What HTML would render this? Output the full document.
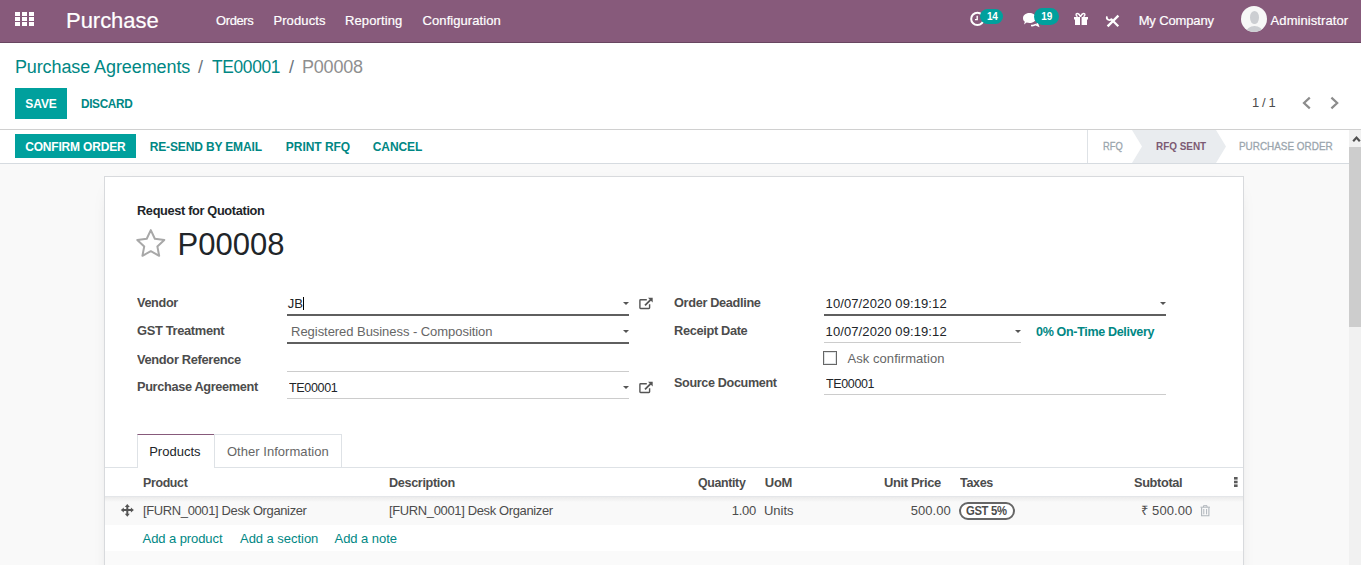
<!DOCTYPE html>
<html><head><meta charset="utf-8">
<style>
*{box-sizing:border-box;margin:0;padding:0}
html,body{width:1361px;height:565px;overflow:hidden;background:#fff}
body{position:relative;font-family:"Liberation Sans",sans-serif;color:#212529}
.a{position:absolute}
.t{position:absolute;line-height:1;white-space:nowrap}
svg{position:absolute;overflow:visible}
</style></head><body>
<!-- NAVBAR -->
<div class="a" style="left:0;top:0;width:1361px;height:43px;background:#875A7B;border-bottom:1px solid #684660"></div>
<svg style="left:15px;top:12px" width="19" height="14" fill="#fff">
<rect x="0" y="0" width="5" height="4"/><rect x="7" y="0" width="5" height="4"/><rect x="14" y="0" width="5" height="4"/>
<rect x="0" y="5" width="5" height="4"/><rect x="7" y="5" width="5" height="4"/><rect x="14" y="5" width="5" height="4"/>
<rect x="0" y="10" width="5" height="4"/><rect x="7" y="10" width="5" height="4"/><rect x="14" y="10" width="5" height="4"/>
</svg>

<!-- control panel line -->
<div class="a" style="left:0;top:129px;width:1361px;height:1px;background:#d0d0d0"></div>
<!-- buttons -->
<div class="a" style="left:15px;top:88px;width:52px;height:31px;background:#00A09D"></div>
<div class="a" style="left:15px;top:134px;width:121px;height:24px;background:#00A09D"></div>

<!-- content bg -->
<div class="a" style="left:0;top:164px;width:1349px;height:401px;background:#f9f9f9"></div>
<div class="a" style="left:0;top:163px;width:1349px;height:1px;background:#d6dbe0"></div>

<!-- statusbar right -->
<div class="a" style="left:1087px;top:130px;width:1px;height:33px;background:#dee2e6"></div>
<svg style="left:1130px;top:130px" width="100" height="33"><polygon points="2,0 86,0 96,16.5 86,33 2,33 12,16.5" fill="#e9ecef"/></svg>

<!-- SHEET -->
<div class="a" style="left:104px;top:176px;width:1140px;height:420px;background:#fff;border:1px solid #d8dadd;box-shadow:0 5px 20px -15px rgba(0,0,0,.4)"></div>

<!-- field lines -->
<div class="a" style="left:303px;top:297px;width:1px;height:13px;background:#000"></div>
<div class="a" style="left:287px;top:314px;width:342px;height:2px;background:#5f5f5f"></div>
<div class="a" style="left:287px;top:342px;width:342px;height:2px;background:#5f5f5f"></div>
<div class="a" style="left:287px;top:371px;width:342px;height:1px;background:#ccc"></div>
<div class="a" style="left:287px;top:398px;width:342px;height:1px;background:#ccc"></div>
<div class="a" style="left:824px;top:314px;width:342px;height:2px;background:#5f5f5f"></div>
<div class="a" style="left:824px;top:342px;width:197px;height:1px;background:#ccc"></div>
<div class="a" style="left:823px;top:351px;width:14px;height:14px;border:1.5px solid #666;background:#fff;box-shadow:inset 0 0 0 1px #dfe3e5"></div>
<div class="a" style="left:824px;top:394px;width:342px;height:1px;background:#ccc"></div>

<!-- carets -->
<svg style="left:623px;top:302px" width="6" height="3"><polygon points="0,0 6,0 3,3" fill="#555"/></svg>
<svg style="left:623px;top:330px" width="6" height="3"><polygon points="0,0 6,0 3,3" fill="#555"/></svg>
<svg style="left:623px;top:386px" width="6" height="3"><polygon points="0,0 6,0 3,3" fill="#555"/></svg>
<svg style="left:1160px;top:302px" width="6" height="3"><polygon points="0,0 6,0 3,3" fill="#555"/></svg>
<svg style="left:1015px;top:330px" width="6" height="3"><polygon points="0,0 6,0 3,3" fill="#555"/></svg>

<!-- tabs -->
<div class="a" style="left:105px;top:467px;width:1138px;height:1px;background:#dee2e6"></div>
<div class="a" style="left:137px;top:434px;width:78px;height:34px;background:#fff;border:1px solid #dee2e6;border-top-color:#875A7B;border-bottom:none"></div>
<div class="a" style="left:214px;top:434px;width:128px;height:33px;border:1px solid #dee2e6;border-bottom:none"></div>

<!-- table -->
<div class="a" style="left:105px;top:496px;width:1138px;height:1px;background:#e4e6e9"></div>
<div class="a" style="left:105px;top:497px;width:1138px;height:28px;background:linear-gradient(#ebebeb,#f9f9f9 5px)"></div>
<div class="a" style="left:105px;top:551px;width:1138px;height:14px;background:#fafafa"></div>
<div class="a" style="left:959px;top:502px;width:56px;height:18px;border:2px solid #666;border-radius:9px;background:#fff"></div>


<!-- navbar icons -->
<svg style="left:968px;top:10px" width="18" height="18"><circle cx="9.4" cy="8.9" r="6.2" fill="none" stroke="#fff" stroke-width="2"/><path d="M9.2 5.8 V9.6 H7" fill="none" stroke="#fff" stroke-width="1.4"/></svg>
<div class="a" style="left:980px;top:9px;width:23px;height:15px;border-radius:8px;background:#00A09D"></div>
<div class="t" style="left:987px;top:12px;font-size:10px;font-weight:bold;color:#fff;letter-spacing:-0.2px">14</div>
<svg style="left:1022px;top:12px" width="18" height="15"><path d="M1 6 C1 2.5 4.5 1 7.5 1 C10.5 1 14 2.5 14 6 C14 9.3 10.5 11 7.5 11 C6.5 11 5.5 10.9 4.6 10.6 L2 12.6 L2.8 9.8 C1.6 8.9 1 7.6 1 6Z" fill="#fff"/><path d="M9 13.5 C10.5 13.7 12.3 13.4 13.4 12.6 L16.2 13.8 L15.4 11.5 C16.4 10.6 16.8 9.6 16.8 8.6" fill="none" stroke="#fff" stroke-width="1.6"/></svg>
<div class="a" style="left:1034px;top:8px;width:25px;height:17px;border-radius:9px;background:#00A09D"></div>
<div class="t" style="left:1041.3px;top:12px;font-size:10px;font-weight:bold;color:#fff">19</div>
<svg style="left:1073px;top:12px" width="16" height="14"><path d="M7.5 4.6 C6.5 2.5 4.8 1.2 3.7 1.7 C2.6 2.2 3 4 4.6 4.6 M7.5 4.6 C8.5 2.5 10.2 1.2 11.3 1.7 C12.4 2.2 12 4 10.4 4.6" fill="none" stroke="#fff" stroke-width="1.4"/><path d="M1 5 H15 V7.6 H14 V13 H2 V7.6 H1Z" fill="#fff"/><rect x="7" y="5" width="1.6" height="8" fill="#875A7B"/></svg>
<svg style="left:1106px;top:14px" width="14" height="14"><path d="M1.6 12.4 L12.4 1.6" stroke="#fff" stroke-width="2.3" fill="none"/><path d="M5 5 L12.3 12.3" stroke="#fff" stroke-width="2.2" fill="none"/><path d="M1.1 2.4 A2.5 2.5 0 0 0 5.6 4.6" stroke="#fff" stroke-width="1.7" fill="none"/></svg>
<div class="a" style="left:1241px;top:6px;width:26px;height:26px;border-radius:50%;overflow:hidden;background:#f7f7f7"><div class="a" style="left:8.6px;top:4.7px;width:9.6px;height:13.6px;border-radius:50%;background:#ccced2"></div><div class="a" style="left:4.6px;top:19.5px;width:17.2px;height:14px;border-radius:50%;background:#ccced2"></div></div>

<!-- pager chevrons -->
<svg style="left:1301px;top:96px" width="12" height="14"><path d="M8.8 1.6 L3.0 7 L8.8 12.4" fill="none" stroke="#8c8c8c" stroke-width="2.2"/></svg>
<svg style="left:1329px;top:96px" width="12" height="14"><path d="M2.4 1.6 L8.2 7 L2.4 12.4" fill="none" stroke="#8c8c8c" stroke-width="2.2"/></svg>

<!-- star -->
<svg style="left:130px;top:223px" width="42" height="42"><polygon id="star" points="20.80,7.10 24.86,15.72 34.31,16.91 27.36,23.43 29.15,32.79 20.80,28.20 12.45,32.79 14.24,23.43 7.29,16.91 16.74,15.72" fill="none" stroke="#a8a8a8" stroke-width="2" stroke-linejoin="round"/></svg>

<!-- external links -->
<svg style="left:638px;top:297px" width="16" height="13"><path d="M8.8 2.7 H2.6 Q1.9 2.7 1.9 3.4 V10.8 Q1.9 11.5 2.6 11.5 H10.9 Q11.6 11.5 11.6 10.8 V7.2" fill="none" stroke="#555" stroke-width="1.4"/><path d="M7 8.4 L13.3 2.1" stroke="#555" stroke-width="1.8"/><polygon points="10,0.8 14.7,0.8 14.7,5.5" fill="#555"/></svg>
<svg style="left:638px;top:381px" width="16" height="13"><path d="M8.8 2.7 H2.6 Q1.9 2.7 1.9 3.4 V10.8 Q1.9 11.5 2.6 11.5 H10.9 Q11.6 11.5 11.6 10.8 V7.2" fill="none" stroke="#555" stroke-width="1.4"/><path d="M7 8.4 L13.3 2.1" stroke="#555" stroke-width="1.8"/><polygon points="10,0.8 14.7,0.8 14.7,5.5" fill="#555"/></svg>

<!-- drag handle -->
<svg style="left:120px;top:503px" width="15" height="15"><path d="M7.3 3 V11.5 M3 7.1 H11.7" stroke="#555" stroke-width="2"/><polygon points="7.3,0.9 9.8,3.9 4.8,3.9" fill="#555"/><polygon points="7.3,13.8 9.8,10.8 4.8,10.8" fill="#555"/><polygon points="0.8,7.1 3.8,4.6 3.8,9.6" fill="#555"/><polygon points="13.9,7.1 10.9,4.6 10.9,9.6" fill="#555"/></svg>

<!-- dots -->
<svg style="left:1234px;top:477px" width="4" height="10" fill="#5a5a5a"><rect x="0" y="0" width="3.6" height="2.6"/><rect x="0" y="3.7" width="3.6" height="2.6"/><rect x="0" y="7.4" width="3.6" height="2.6"/></svg>

<!-- trash -->
<svg style="left:1200px;top:505px" width="11" height="12"><path d="M0.5 2.2 H10 M3.5 2.2 V0.7 H7 V2.2" fill="none" stroke="#b0b6bc" stroke-width="1"/><path d="M1.6 2.5 V10.7 H8.9 V2.5" fill="none" stroke="#b0b6bc" stroke-width="1.1"/><path d="M3.8 4 V9.3 M6.6 4 V9.3" stroke="#b0b6bc" stroke-width="1"/></svg>


<!-- scrollbar -->
<div class="a" style="left:1349px;top:130px;width:12px;height:435px;background:#f1f1f1"></div>
<div class="a" style="left:1349px;top:147px;width:12px;height:180px;background:#cdcdcd"></div>
<!-- scroll arrow -->
<svg style="left:1349px;top:130px" width="12" height="17"><path d="M4.2 11.2 L7.5 7.6 L10.8 11.2" fill="none" stroke="#505050" stroke-width="2.2"/></svg>

<div class="t" style="left:66.00px;top:10.00px;font-size:22px;color:#ffffff;letter-spacing:-0.029px;-webkit-text-stroke:0.2px #fff">Purchase</div>
<div class="t" style="left:215.80px;top:14.20px;font-size:13px;color:#ffffff;letter-spacing:-0.350px;transform:scaleX(0.9927);transform-origin:0 0;-webkit-text-stroke:0.2px #fff">Orders</div>
<div class="t" style="left:273.40px;top:14.20px;font-size:13px;color:#ffffff;letter-spacing:0.114px;-webkit-text-stroke:0.2px #fff">Products</div>
<div class="t" style="left:345.00px;top:14.20px;font-size:13px;color:#ffffff;letter-spacing:0.108px;-webkit-text-stroke:0.2px #fff">Reporting</div>
<div class="t" style="left:422.60px;top:14.20px;font-size:13px;color:#ffffff;letter-spacing:0.067px;-webkit-text-stroke:0.2px #fff">Configuration</div>
<div class="t" style="left:1138.70px;top:14.00px;font-size:13px;color:#ffffff;letter-spacing:-0.142px;-webkit-text-stroke:0.2px #fff">My Company</div>
<div class="t" style="left:1270.60px;top:14.00px;font-size:13px;color:#ffffff;letter-spacing:0.071px;-webkit-text-stroke:0.2px #fff">Administrator</div>
<div class="t" style="left:14.90px;top:57.90px;font-size:18px;color:#008784;letter-spacing:-0.094px">Purchase Agreements</div>
<div class="t" style="left:198.00px;top:57.90px;font-size:18px;color:#6c757d">/</div>
<div class="t" style="left:212.30px;top:57.90px;font-size:18px;color:#008784;letter-spacing:-0.350px;transform:scaleX(0.9641);transform-origin:0 0">TE00001</div>
<div class="t" style="left:289.00px;top:57.90px;font-size:18px;color:#6c757d">/</div>
<div class="t" style="left:302.00px;top:57.90px;font-size:18px;color:#8f8f8f;letter-spacing:-0.210px">P00008</div>
<div class="t" style="left:25.30px;top:97.70px;font-size:12px;color:#ffffff;font-weight:bold;letter-spacing:-0.094px">SAVE</div>
<div class="t" style="left:80.70px;top:97.70px;font-size:12px;color:#008784;font-weight:bold;letter-spacing:-0.350px;transform:scaleX(0.9830);transform-origin:0 0">DISCARD</div>
<div class="t" style="left:1252.00px;top:96.00px;font-size:13px;color:#4c4c4c;letter-spacing:-0.350px;transform:scaleX(0.9972);transform-origin:0 0">1 / 1</div>
<div class="t" style="left:25.20px;top:140.50px;font-size:12px;color:#ffffff;font-weight:bold;letter-spacing:-0.183px">CONFIRM ORDER</div>
<div class="t" style="left:149.70px;top:140.50px;font-size:12px;color:#008784;font-weight:bold;letter-spacing:-0.143px">RE-SEND BY EMAIL</div>
<div class="t" style="left:285.80px;top:140.50px;font-size:12px;color:#008784;font-weight:bold;letter-spacing:-0.041px">PRINT RFQ</div>
<div class="t" style="left:372.80px;top:140.50px;font-size:12px;color:#008784;font-weight:bold;letter-spacing:-0.114px">CANCEL</div>
<div class="t" style="left:1103.20px;top:140.50px;font-size:11.5px;color:#9aa5ad;transform:scaleX(0.8138);transform-origin:0 0;-webkit-text-stroke:0.3px #9aa5ad">RFQ</div>
<div class="t" style="left:1155.60px;top:140.50px;font-size:11.5px;color:#7c5a73;font-weight:bold;transform:scaleX(0.8621);transform-origin:0 0">RFQ SENT</div>
<div class="t" style="left:1238.60px;top:140.50px;font-size:11.5px;color:#9aa5ad;transform:scaleX(0.8622);transform-origin:0 0;-webkit-text-stroke:0.3px #9aa5ad">PURCHASE ORDER</div>
<div class="t" style="left:136.80px;top:203.80px;font-size:13px;color:#212529;font-weight:bold;letter-spacing:-0.350px;transform:scaleX(0.9818);transform-origin:0 0">Request for Quotation</div>
<div class="t" style="left:177.60px;top:228.80px;font-size:31px;color:#212529;letter-spacing:0.012px">P00008</div>
<div class="t" style="left:137.00px;top:296.30px;font-size:13px;color:#4c4c4c;font-weight:bold;letter-spacing:-0.350px;transform:scaleX(0.9750);transform-origin:0 0">Vendor</div>
<div class="t" style="left:137.00px;top:324.20px;font-size:13px;color:#4c4c4c;font-weight:bold;letter-spacing:-0.350px;transform:scaleX(0.9917);transform-origin:0 0">GST Treatment</div>
<div class="t" style="left:137.00px;top:353.00px;font-size:13px;color:#4c4c4c;font-weight:bold;letter-spacing:-0.350px;transform:scaleX(0.9899);transform-origin:0 0">Vendor Reference</div>
<div class="t" style="left:137.00px;top:379.80px;font-size:13px;color:#4c4c4c;font-weight:bold;letter-spacing:-0.350px;transform:scaleX(0.9810);transform-origin:0 0">Purchase Agreement</div>
<div class="t" style="left:673.90px;top:296.10px;font-size:13px;color:#4c4c4c;font-weight:bold;letter-spacing:-0.350px;transform:scaleX(0.9806);transform-origin:0 0">Order Deadline</div>
<div class="t" style="left:673.90px;top:324.20px;font-size:13px;color:#4c4c4c;font-weight:bold;letter-spacing:-0.350px;transform:scaleX(0.9843);transform-origin:0 0">Receipt Date</div>
<div class="t" style="left:673.90px;top:376.00px;font-size:13px;color:#4c4c4c;font-weight:bold;letter-spacing:-0.350px;transform:scaleX(0.9690);transform-origin:0 0">Source Document</div>
<div class="t" style="left:287.70px;top:297.20px;font-size:13px;color:#212529">JB</div>
<div class="t" style="left:291.10px;top:325.20px;font-size:13px;color:#666666;letter-spacing:-0.050px">Registered Business - Composition</div>
<div class="t" style="left:288.70px;top:380.60px;font-size:13px;color:#212529;letter-spacing:-0.350px;transform:scaleX(0.9637);transform-origin:0 0">TE00001</div>
<div class="t" style="left:825.60px;top:297.00px;font-size:13px;color:#212529;letter-spacing:0.097px">10/07/2020 09:19:12</div>
<div class="t" style="left:825.60px;top:324.80px;font-size:13px;color:#212529;letter-spacing:0.097px">10/07/2020 09:19:12</div>
<div class="t" style="left:1036.00px;top:325.00px;font-size:13px;color:#008784;font-weight:bold;letter-spacing:-0.350px;transform:scaleX(0.9647);transform-origin:0 0">0% On-Time Delivery</div>
<div class="t" style="left:847.50px;top:351.70px;font-size:13px;color:#666666;letter-spacing:0.056px">Ask confirmation</div>
<div class="t" style="left:826.00px;top:376.80px;font-size:13px;color:#212529;letter-spacing:-0.350px;transform:scaleX(0.9577);transform-origin:0 0">TE00001</div>
<div class="t" style="left:149.20px;top:445.00px;font-size:13px;color:#212529;letter-spacing:0.014px">Products</div>
<div class="t" style="left:226.90px;top:445.00px;font-size:13px;color:#666666;letter-spacing:0.042px">Other Information</div>
<div class="t" style="left:142.60px;top:475.80px;font-size:13px;color:#4c4c4c;font-weight:bold;letter-spacing:-0.350px;transform:scaleX(0.9521);transform-origin:0 0">Product</div>
<div class="t" style="left:388.50px;top:475.80px;font-size:13px;color:#4c4c4c;font-weight:bold;letter-spacing:-0.350px;transform:scaleX(0.9725);transform-origin:0 0">Description</div>
<div class="t" style="left:697.90px;top:475.80px;font-size:13px;color:#4c4c4c;font-weight:bold;letter-spacing:-0.350px;transform:scaleX(0.9502);transform-origin:0 0">Quantity</div>
<div class="t" style="left:764.80px;top:475.80px;font-size:13px;color:#4c4c4c;font-weight:bold;letter-spacing:-0.265px">UoM</div>
<div class="t" style="left:883.80px;top:475.80px;font-size:13px;color:#4c4c4c;font-weight:bold;letter-spacing:-0.350px;transform:scaleX(0.9964);transform-origin:0 0">Unit Price</div>
<div class="t" style="left:959.50px;top:475.80px;font-size:13px;color:#4c4c4c;font-weight:bold;letter-spacing:-0.350px;transform:scaleX(0.9660);transform-origin:0 0">Taxes</div>
<div class="t" style="left:1133.90px;top:475.80px;font-size:13px;color:#4c4c4c;font-weight:bold;letter-spacing:-0.350px;transform:scaleX(0.9810);transform-origin:0 0">Subtotal</div>
<div class="t" style="left:142.60px;top:503.80px;font-size:13px;color:#4c4c4c;letter-spacing:-0.350px;transform:scaleX(0.9956);transform-origin:0 0">[FURN_0001] Desk Organizer</div>
<div class="t" style="left:388.50px;top:503.80px;font-size:13px;color:#4c4c4c;letter-spacing:-0.350px;transform:scaleX(0.9969);transform-origin:0 0">[FURN_0001] Desk Organizer</div>
<div class="t" style="left:731.80px;top:503.80px;font-size:13px;color:#4c4c4c;letter-spacing:-0.291px">1.00</div>
<div class="t" style="left:764.00px;top:503.80px;font-size:13px;color:#4c4c4c;letter-spacing:-0.030px">Units</div>
<div class="t" style="left:910.80px;top:503.80px;font-size:13px;color:#4c4c4c;letter-spacing:0.014px">500.00</div>
<div class="t" style="left:966.20px;top:504.70px;font-size:12px;color:#4c4c4c;font-weight:bold;letter-spacing:-0.350px;transform:scaleX(0.9379);transform-origin:0 0">GST 5%</div>
<div class="t" style="left:1141.30px;top:503.80px;font-size:13px;color:#4c4c4c;letter-spacing:0.079px">₹ 500.00</div>
<div class="t" style="left:142.60px;top:531.70px;font-size:13px;color:#008784;letter-spacing:-0.086px">Add a product</div>
<div class="t" style="left:240.00px;top:531.70px;font-size:13px;color:#008784;letter-spacing:-0.037px">Add a section</div>
<div class="t" style="left:334.60px;top:531.70px;font-size:13px;color:#008784;letter-spacing:-0.062px">Add a note</div>
</body></html>
